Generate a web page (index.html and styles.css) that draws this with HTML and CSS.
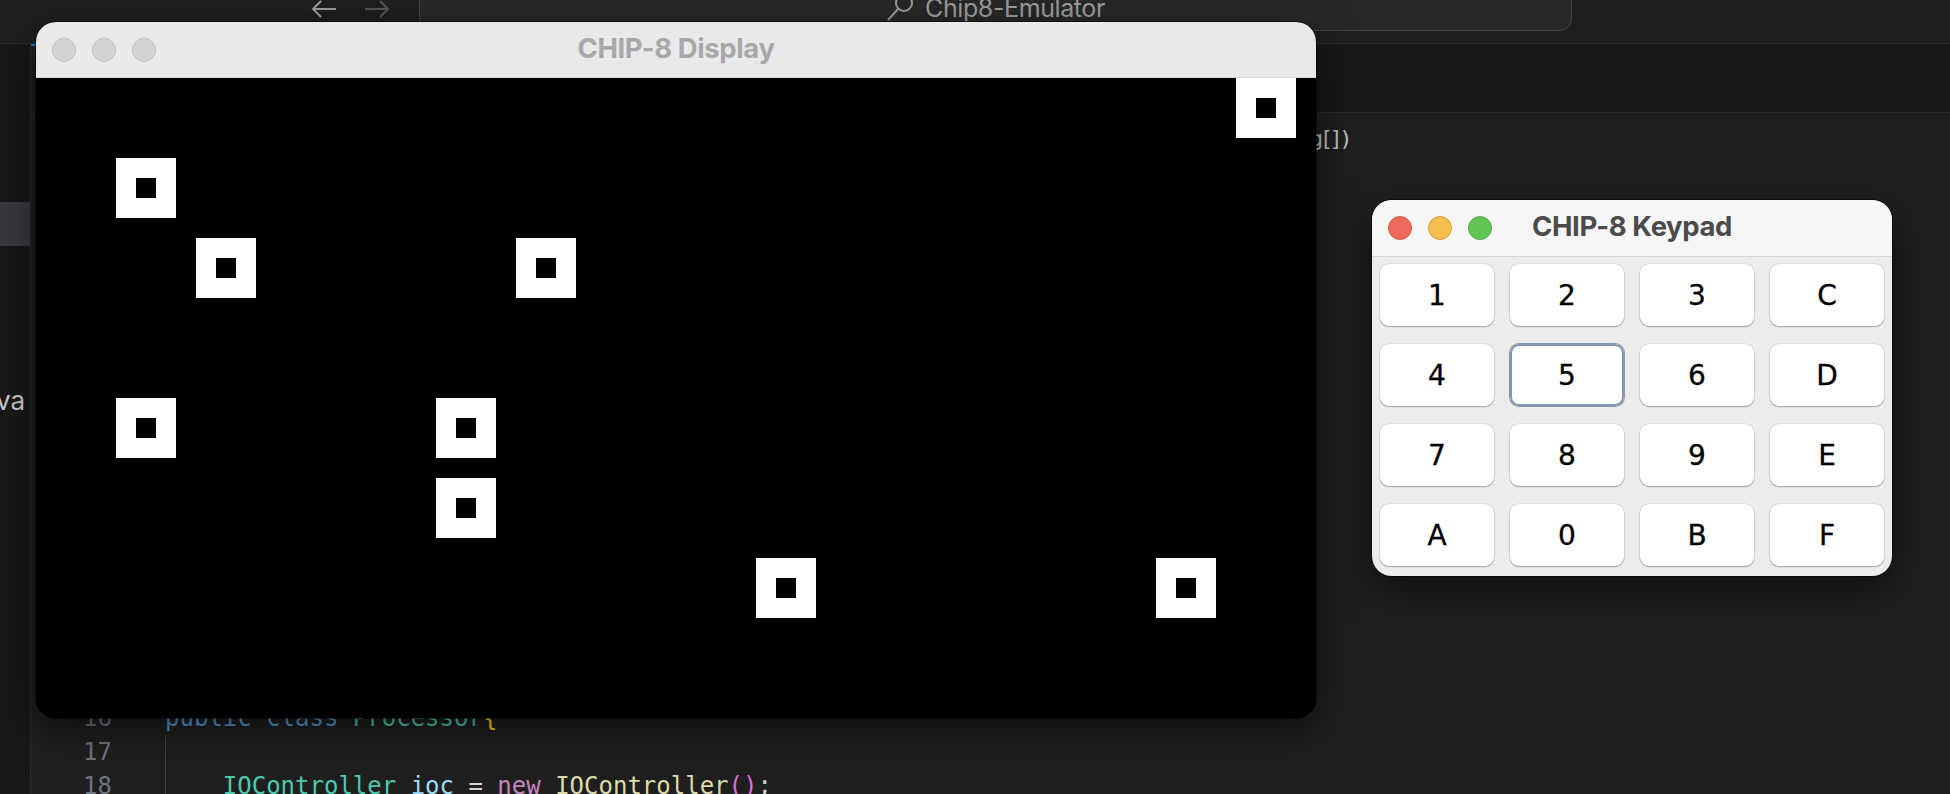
FILE: index.html
```html
<!DOCTYPE html>
<html lang="en">
<head>
<meta charset="utf-8">
<title>Chip8-Emulator</title>
<link rel="stylesheet" href="styles.css">
</head>
<body>
<div class="vscode">
  <header class="titlebar">
    <div class="nav">
      <svg class="arrow back" width="26" height="18" viewBox="0 0 26 18"><path d="M25 9H2M10 1L2 9l8 8" fill="none" stroke="currentColor" stroke-width="2"/></svg>
      <svg class="arrow fwd" width="26" height="18" viewBox="0 0 26 18"><path d="M1 9h23M16 1l8 8-8 8" fill="none" stroke="currentColor" stroke-width="2"/></svg>
    </div>
    <div class="command-center">
      <svg class="search-icon" width="28" height="28" viewBox="0 0 28 28"><circle cx="18" cy="10" r="8" fill="none" stroke="currentColor" stroke-width="2"/><path d="M12.5 15.5L2 27" stroke="currentColor" stroke-width="2"/></svg>
      <span class="cc-label">Chip8-Emulator</span>
    </div>
  </header>
  <div class="workbench">
    <aside class="sidebar">
      <div class="tree-row selected"></div>
      <div class="tree-row"></div>
      <div class="tree-row"></div>
      <div class="tree-row"></div>
      <div class="tree-row"><span class="tree-label">Processor.java</span></div>
    </aside>
    <main class="editor">
      <div class="tabs"><div class="tab active"></div></div>
      <div class="sticky"><span class="sticky-text">public static void main(String arg[])</span></div>
      <div class="code">
        <div class="line"><span class="ln">16</span><span class="src"><span class="kw">public</span> <span class="kw">class</span> <span class="ty">Processor</span><span class="br">{</span></span></div>
        <div class="line"><span class="ln">17</span><span class="src guide"> </span></div>
        <div class="line"><span class="ln">18</span><span class="src guide">    <span class="ty">IOController</span> <span class="var">ioc</span> <span class="op">=</span> <span class="new">new</span> <span class="fn">IOController</span><span class="pr">()</span><span class="op">;</span></span></div>
      </div>
    </main>
  </div>
</div>

<section class="window display-window">
  <div class="win-title inactive">
    <div class="lights">
      <span class="light"></span><span class="light"></span><span class="light"></span>
    </div>
    <div class="win-name">CHIP-8 Display</div>
  </div>
  <svg class="screen" width="1280" height="640" viewBox="0 0 64 32" shape-rendering="crispEdges">
    <defs>
      <g id="spr"><rect width="3" height="3" fill="#fff"/><rect x="1" y="1" width="1" height="1" fill="#000"/></g>
    </defs>
    <rect width="64" height="32" fill="#000"/>
    <use href="#spr" x="60" y="0"/>
    <use href="#spr" x="4" y="4"/>
    <use href="#spr" x="8" y="8"/>
    <use href="#spr" x="24" y="8"/>
    <use href="#spr" x="4" y="16"/>
    <use href="#spr" x="20" y="16"/>
    <use href="#spr" x="20" y="20"/>
    <use href="#spr" x="36" y="24"/>
    <use href="#spr" x="56" y="24"/>
  </svg>
</section>

<section class="window keypad-window">
  <div class="win-title active">
    <div class="lights">
      <span class="light red"></span><span class="light yellow"></span><span class="light green"></span>
    </div>
    <div class="win-name">CHIP-8 Keypad</div>
  </div>
  <div class="keys">
    <button class="key">1</button><button class="key">2</button><button class="key">3</button><button class="key">C</button>
    <button class="key">4</button><button class="key focused">5</button><button class="key">6</button><button class="key">D</button>
    <button class="key">7</button><button class="key">8</button><button class="key">9</button><button class="key">E</button>
    <button class="key">A</button><button class="key">0</button><button class="key">B</button><button class="key">F</button>
  </div>
</section>
</body>
</html>
```

FILE: styles.css
```css
* { box-sizing: border-box; }
html, body { margin: 0; padding: 0; }
body {
  width: 1950px;
  height: 794px;
  overflow: hidden;
  position: relative;
  background: #1f1f1f;
  font-family: "Inter", "Liberation Sans", sans-serif;
}

.vscode {
  display: flex;
  flex-direction: column;
  height: 794px;
}

/* ---------- title bar ---------- */
.titlebar {
  height: 44px;
  flex: none;
  display: flex;
  align-items: flex-start;
  background: #1f1f1f;
  border-bottom: 1px solid #2b2b2b;
  padding-left: 311px;
}
.nav {
  display: flex;
  gap: 27px;
}
.arrow { display: block; }
.arrow.back { color: #9c9c9c; }
.arrow.fwd { color: #575757; }
.command-center {
  margin-left: 29px;
  margin-top: -15px;
  width: 1153px;
  height: 46px;
  border: 1px solid #444;
  border-radius: 12px;
  background: #282828;
  display: flex;
  align-items: center;
  justify-content: center;
  gap: 11px;
  color: #9d9d9d;
}
.search-icon { display: block; margin-top: -2px; }
.cc-label {
  font-size: 25px;
  letter-spacing: -0.4px;
  line-height: 1;
}

/* ---------- workbench ---------- */
.workbench {
  flex: 1;
  display: flex;
  min-height: 0;
}
.sidebar {
  width: 31px;
  flex: none;
  background: #181818;
  border-right: 1px solid #2b2b2b;
  padding-top: 158px;
  overflow: hidden;
}
.tree-row {
  height: 44px;
  display: flex;
  align-items: center;
  justify-content: flex-end;
  padding-right: 5px;
  overflow: hidden;
  white-space: nowrap;
}
.tree-row.selected { background: #37373d; }
.tree-label {
  color: #cccccc;
  font-size: 26px;
}

.editor {
  flex: 1;
  display: flex;
  flex-direction: column;
  background: #1f1f1f;
  min-width: 0;
}
.tabs {
  height: 69px;
  flex: none;
  background: #181818;
  border-bottom: 1px solid #2b2b2b;
  display: flex;
}
.tab.active {
  width: 420px;
  height: 68px;
  background: #1f1f1f;
  border-top: 2px solid #0078d4;
}
.sticky {
  height: 54px;
  flex: none;
  display: flex;
  align-items: center;
}
.sticky-text {
  width: 1318px;
  text-align: right;
  white-space: nowrap;
  overflow: hidden;
  font-family: "DejaVu Sans Mono", "Liberation Mono", monospace;
  font-size: 22px;
  letter-spacing: -3.5px;
  color: #bdbdbd;
  margin-top: -4px;
}

.code {
  padding-top: 534px;
  font-family: "DejaVu Sans Mono", "Liberation Mono", monospace;
  font-size: 24px;
}
.line {
  height: 34px;
  line-height: 34px;
  display: flex;
  white-space: pre;
}
.ln {
  width: 81px;
  text-align: right;
  color: #6e7681;
  flex: none;
}
.src {
  margin-left: 53px;
  color: #d4d4d4;
  flex: 1;
}
.src.guide {
  background: linear-gradient(#404040, #404040) 0 0 / 1px 100% no-repeat;
}
.kw { color: #569cd6; }
.ty { color: #4ec9b0; }
.br { color: #ffd700; }
.var { color: #9cdcfe; }
.op { color: #d4d4d4; }
.new { color: #c586c0; }
.fn { color: #dcdcaa; }
.pr { color: #da70d6; }

/* ---------- macOS windows ---------- */
.window {
  position: absolute;
  border-radius: 20px;
  overflow: hidden;
  box-shadow: 0 12px 40px rgba(0, 0, 0, 0.55), 0 0 0 1px rgba(0, 0, 0, 0.5);
}
.display-window {
  left: 36px;
  top: 22px;
  width: 1280px;
  background: #000;
}
.keypad-window {
  left: 1372px;
  top: 200px;
  width: 520px;
  height: 376px;
  background: #ececec;
}
.win-title {
  height: 56px;
  display: grid;
  grid-template-columns: 1fr auto 1fr;
  align-items: center;
  padding: 0 16px;
  box-shadow: inset 0 -1px 0 #d4d4d6;
}
.win-title.inactive { background: #e8e9eb; }
.win-title.active { background: #f6f6f7; height: 57px; border-bottom: 1px solid #d7d7d7; box-shadow: none; }
.lights {
  display: flex;
  gap: 16px;
}
.light {
  width: 24px;
  height: 24px;
  border-radius: 50%;
  background: #d3d3d5;
  border: 1px solid #bcbcbe;
}
.light.red { background: #ee6a5f; border-color: #d65a4f; }
.light.yellow { background: #f5bf4f; border-color: #d9a341; }
.light.green { background: #61c554; border-color: #52a945; }
.win-name {
  font-size: 27.5px;
  font-weight: 700;
  letter-spacing: -0.4px;
  line-height: 1;
  margin-top: -2px;
}
.inactive .win-name { color: #a8a8a8; }
.active .win-name { color: #4b4b4b; }

.screen { display: block; }

.keys {
  display: grid;
  grid-template-columns: repeat(4, 114px);
  grid-auto-rows: 62px;
  column-gap: 16px;
  row-gap: 18px;
  padding: 7px 8px 10px;
}
.key {
  margin: 0;
  padding: 0;
  border: none;
  border-radius: 9px;
  background: #fff;
  font-family: "DejaVu Sans", "Noto Sans", sans-serif;
  font-size: 28px;
  color: #000;
  -webkit-text-stroke: 0.3px #000;
  box-shadow: 0 1px 1.5px rgba(0, 0, 0, 0.3), 0 0 0 0.5px rgba(0, 0, 0, 0.1);
}
.key.focused {
  box-shadow: 0 0 0 1px #8596ac, inset 0 0 0 2px #8596ac;
}
```
